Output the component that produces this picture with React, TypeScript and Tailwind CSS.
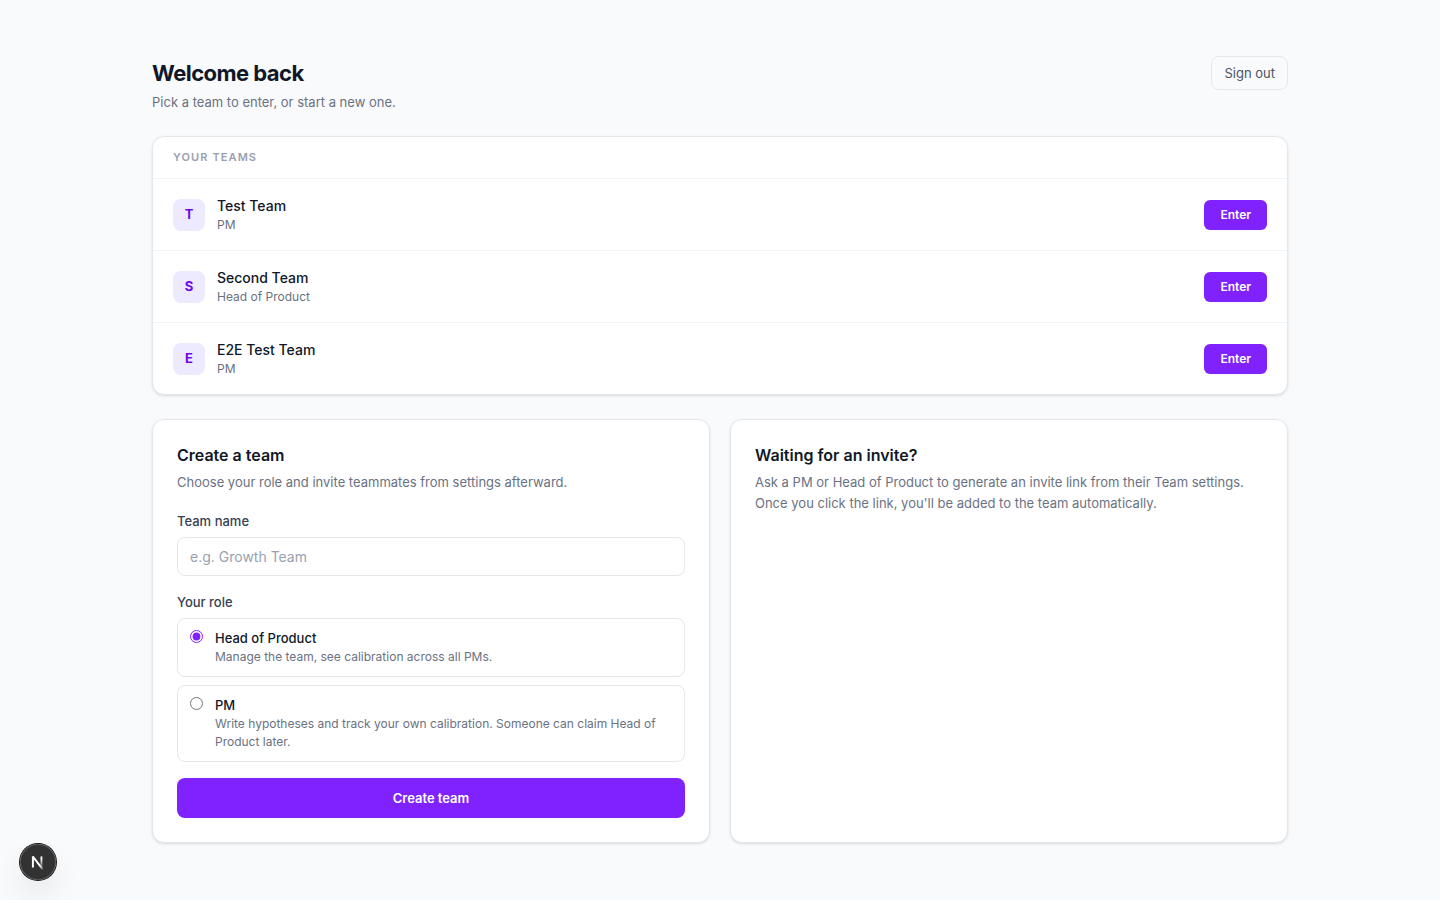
import { useState } from 'react';
import type { FormEvent } from 'react';

type Role = 'head' | 'pm';

const teams = [
  { id: 1, name: 'Test Team', role: 'PM' },
  { id: 2, name: 'Second Team', role: 'Head of Product' },
  { id: 3, name: 'E2E Test Team', role: 'PM' },
];

const roles: { value: Role; title: string; description: string }[] = [
  {
    value: 'head',
    title: 'Head of Product',
    description: 'Manage the team, see calibration across all PMs.',
  },
  {
    value: 'pm',
    title: 'PM',
    description:
      'Write hypotheses and track your own calibration. Someone can claim Head of Product later.',
  },
];

function TeamList() {
  return (
    <section className="mb-6 rounded-xl border border-gray-200 bg-white shadow-sm">
      <h2 className="border-b border-gray-100 px-5 py-3 text-[11px] leading-[17px] font-semibold tracking-widest text-gray-400 uppercase">
        Your teams
      </h2>
      <ul className="divide-y divide-gray-100">
        {teams.map((team) => (
          <li key={team.id} className="flex items-center justify-between px-5 py-4">
            <div className="flex items-center gap-3">
              <span className="flex h-8 w-8 items-center justify-center rounded-lg bg-violet-100 text-[13px] font-bold text-violet-700">
                {team.name[0]}
              </span>
              <div>
                <p className="text-[14px] leading-[21px] font-medium text-gray-900">{team.name}</p>
                <p className="text-[12px] leading-[18px] text-gray-500">{team.role}</p>
              </div>
            </div>
            <button
              type="button"
              className="rounded-md bg-violet-600 px-4 py-1.5 text-[12px] leading-[18px] font-semibold text-white hover:bg-violet-700"
            >
              Enter
            </button>
          </li>
        ))}
      </ul>
    </section>
  );
}

function CreateTeam() {
  const [name, setName] = useState('');
  const [role, setRole] = useState<Role>('head');

  function handleSubmit(e: FormEvent) {
    e.preventDefault();
  }

  return (
    <section className="rounded-xl border border-gray-200 bg-white p-6 shadow-sm">
      <h2 className="text-[16px] leading-[22px] font-semibold text-gray-900">Create a team</h2>
      <p className="mt-1.5 mb-[18px] text-[13px] leading-[21px] text-gray-500">
        Choose your role and invite teammates from settings afterward.
      </p>

      <form onSubmit={handleSubmit} className="flex flex-col gap-4">
        <div>
          <label
            htmlFor="team-name"
            className="mb-1.5 block text-[13px] leading-5 font-medium text-gray-700"
          >
            Team name
          </label>
          <input
            id="team-name"
            type="text"
            value={name}
            onChange={(e) => setName(e.target.value)}
            placeholder="e.g. Growth Team"
            className="block w-full rounded-lg border border-gray-200 bg-white px-3 py-2 text-[14px] leading-[21px] text-gray-900 outline-none placeholder:text-gray-400 focus:border-violet-500"
          />
        </div>

        <fieldset>
          <legend className="mb-1.5 text-[13px] leading-5 font-medium text-gray-700">
            Your role
          </legend>
          <div className="flex flex-col gap-2">
            {roles.map((option) => (
              <label
                key={option.value}
                className="flex cursor-pointer items-start gap-3 rounded-lg border border-gray-200 px-3 py-2.5"
              >
                <input
                  type="radio"
                  name="role"
                  value={option.value}
                  checked={role === option.value}
                  onChange={() => setRole(option.value)}
                  className="mt-px shrink-0 accent-violet-600"
                />
                <span>
                  <span className="block text-[13px] leading-[19px] font-medium text-gray-900">
                    {option.title}
                  </span>
                  <span className="block text-[12px] leading-[18px] text-gray-500">
                    {option.description}
                  </span>
                </span>
              </label>
            ))}
          </div>
        </fieldset>

        <button
          type="submit"
          className="w-full rounded-lg bg-violet-600 py-2.5 text-[13px] leading-5 font-semibold text-white hover:bg-violet-700"
        >
          Create team
        </button>
      </form>
    </section>
  );
}

function DevBadge() {
  return (
    <button
      type="button"
      aria-label="Open dev tools"
      className="fixed bottom-5 left-5 flex h-9 w-9 items-center justify-center rounded-full bg-black/80 shadow-[0_0_0_1px_#171717,inset_0_0_0_1px_hsla(0,0%,100%,0.14),0_16px_32px_-8px_rgba(0,0,0,0.24)]"
    >
      <svg width="36" height="36" viewBox="0 0 40 40" fill="none">
        <defs>
          <linearGradient id="n-diagonal" x1="9.95" y1="11.13" x2="14.2" y2="16.4" gradientUnits="userSpaceOnUse">
            <stop stopColor="white" />
            <stop offset="1" stopColor="white" stopOpacity="0" />
          </linearGradient>
          <linearGradient id="n-stem" x1="11.82" y1="4" x2="11.82" y2="13.5" gradientUnits="userSpaceOnUse">
            <stop stopColor="white" />
            <stop offset="1" stopColor="white" stopOpacity="0.1" />
          </linearGradient>
        </defs>
        <g transform="translate(12 13)">
          <path d="M13.3 15.2 L2.34 1 V13" stroke="url(#n-diagonal)" strokeWidth="2.2" strokeLinejoin="bevel" />
          <path d="M11.825 0.8 V13.1" stroke="url(#n-stem)" strokeWidth="2" />
        </g>
      </svg>
    </button>
  );
}

export default function App() {
  return (
    <div className="min-h-screen bg-gray-50 font-['Inter',sans-serif] text-gray-900">
      <main className="mx-auto max-w-[1200px] px-8 py-14">
        <header className="mb-6 flex items-start justify-between">
          <div>
            <h1 className="text-[22px] leading-[34px] font-bold tracking-tight">Welcome back</h1>
            <p className="mt-0.5 text-[13px] leading-5 text-gray-500">
              Pick a team to enter, or start a new one.
            </p>
          </div>
          <button
            type="button"
            className="rounded-lg border border-gray-200 px-3 py-1.5 text-[13px] leading-5 text-gray-600 hover:bg-gray-100"
          >
            Sign out
          </button>
        </header>

        <TeamList />

        <div className="grid grid-cols-1 gap-5 md:grid-cols-2">
          <CreateTeam />
          <section className="rounded-xl border border-gray-200 bg-white p-6 shadow-sm">
            <h2 className="text-[16px] leading-[22px] font-semibold text-gray-900">
              Waiting for an invite?
            </h2>
            <p className="mt-1.5 text-[13px] leading-[21px] text-gray-500">
              Ask a PM or Head of Product to generate an invite link from their Team settings. Once
              you click the link, you'll be added to the team automatically.
            </p>
          </section>
        </div>
      </main>
      <DevBadge />
    </div>
  );
}
